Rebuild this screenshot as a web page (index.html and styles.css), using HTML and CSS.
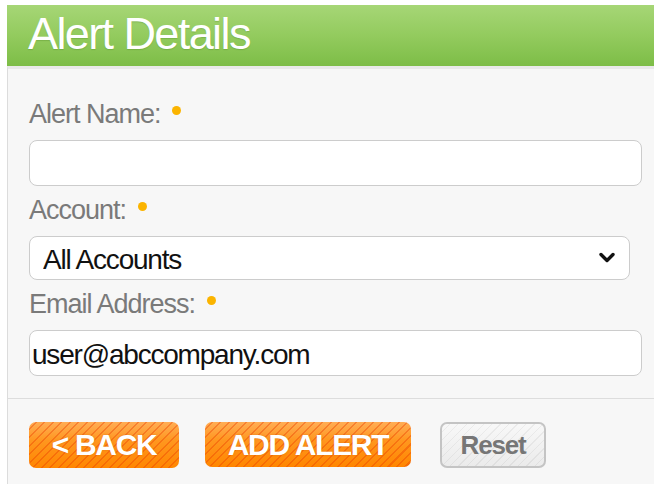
FILE: index.html
```html
<!DOCTYPE html>
<html>
<head>
<meta charset="utf-8">
<title>Alert Details</title>
<link rel="stylesheet" href="styles.css">
</head>
<body>
<div class="panel">
  <div class="panel-header">Alert Details</div>
  <form class="panel-body">
    <div class="fields">
      <div class="field">
        <label class="field-label" for="alert-name">Alert Name: <span class="req"></span></label>
        <input class="text-input" id="alert-name" type="text">
      </div>
      <div class="field">
        <label class="field-label" for="account">Account: <span class="req"></span></label>
        <div class="select-wrap">
          <select class="select-input" id="account">
            <option>All Accounts</option>
          </select>
          <svg class="select-caret" width="16" height="11" viewBox="0 0 16 11"><path d="M2 2.5 L8 8.5 L14 2.5" fill="none" stroke="#111" stroke-width="3.4" stroke-linecap="round" stroke-linejoin="round"/></svg>
        </div>
      </div>
      <div class="field">
        <label class="field-label" for="email">Email Address: <span class="req"></span></label>
        <input class="text-input" id="email" type="text" value="user@abccompany.com">
      </div>
    </div>
    <div class="actions">
      <button type="button" class="btn btn-orange btn-back">&lt; BACK</button>
      <button type="button" class="btn btn-orange btn-add">ADD ALERT</button>
      <button type="reset" class="btn btn-gray">Reset</button>
    </div>
  </form>
</div>
</body>
</html>
```

FILE: styles.css
```css
html, body {
  margin: 0;
  padding: 0;
  background: #ffffff;
}

body {
  font-family: "Liberation Sans", Arial, sans-serif;
}

.panel {
  margin: 5px 0 0 7px;
}

.panel-header {
  height: 61px;
  box-sizing: border-box;
  padding: 0 0 4px 21px;
  line-height: 57px;
  font-size: 45px;
  letter-spacing: -1.6px;
  color: #ffffff;
  text-shadow: 0 1px 1px rgba(60, 110, 20, 0.25);
  background: linear-gradient(to bottom, #a6d676 0%, #93cb5e 50%, #7dbd47 100%);
}

.panel-body {
  margin: 0;
  background: #f7f7f7;
  border-top: 3px solid #e9e9e9;
  border-left: 1px solid #dcdcdc;
}

.fields {
  padding: 28px 12px 22px 21px;
  display: flex;
  flex-direction: column;
  gap: 7px;
  border-bottom: 1px solid #dddddd;
}

.field {
  display: flex;
  flex-direction: column;
}

.field-label {
  font-size: 27px;
  line-height: 34px;
  letter-spacing: -1px;
  color: #7a7a7a;
  margin-bottom: 9px;
}

.req {
  display: inline-block;
  width: 9px;
  height: 9px;
  border-radius: 50%;
  background: #fbb400;
  vertical-align: 8px;
  margin-left: 5px;
}

.text-input,
.select-input {
  box-sizing: border-box;
  height: 46px;
  margin: 0;
  background: #ffffff;
  border: 1px solid #cccccc;
  border-radius: 8px;
  font-family: "Liberation Sans", Arial, sans-serif;
  font-size: 28px;
  letter-spacing: -1.2px;
  color: #111111;
  outline: none;
}

.text-input {
  width: 100%;
  padding: 3px 2px 0;
}

.select-wrap {
  position: relative;
  width: 601px;
}

.select-input {
  width: 100%;
  height: 44px;
  padding: 2px 40px 0 13px;
  appearance: none;
  -webkit-appearance: none;
}

.select-caret {
  position: absolute;
  right: 15px;
  top: 16px;
}

.actions {
  display: flex;
  align-items: flex-start;
  padding: 23px 0 20px 21px;
}

.btn {
  box-sizing: border-box;
  height: 46px;
  margin: 0;
  padding: 0;
  white-space: nowrap;
  font-family: "Liberation Sans", Arial, sans-serif;
  font-weight: bold;
  cursor: pointer;
}

.btn-orange {
  border: none;
  border-radius: 7px;
  color: #ffffff;
  font-size: 30px;
  letter-spacing: -1.3px;
  text-shadow: 0 0 2px rgba(190, 70, 0, 0.45);
  background:
    repeating-linear-gradient(135deg, rgba(235, 60, 0, 0) 0px, rgba(235, 60, 0, 0) 4.5px, rgba(235, 60, 0, 0.38) 4.5px, rgba(235, 60, 0, 0.38) 6px),
    linear-gradient(to bottom, #ffad55 0%, #ff971f 40%, #ff8600 100%);
}

.btn-back {
  width: 150px;
  margin-right: 26px;
}

.btn-add {
  width: 206px;
  height: 45px;
  margin-right: 29px;
}

.btn-gray {
  width: 106px;
  border: 2px solid #c4c4c4;
  border-radius: 7px;
  color: #767676;
  font-size: 26px;
  letter-spacing: -1.2px;
  background:
    repeating-linear-gradient(135deg, rgba(0, 0, 0, 0) 0px, rgba(0, 0, 0, 0) 5px, rgba(0, 0, 0, 0.05) 5px, rgba(0, 0, 0, 0.05) 6px),
    linear-gradient(to bottom, #f8f8f8 0%, #ebebeb 100%);
}
```
